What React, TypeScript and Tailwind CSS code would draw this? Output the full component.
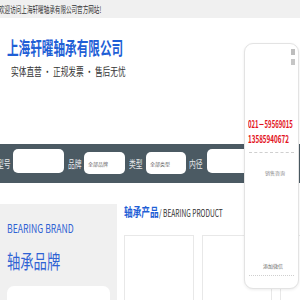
import React from "react";

const S = ({ s, children, className = "" }: { s: string; children: React.ReactNode; className?: string }) => (
  <span className={`inline-block origin-left whitespace-nowrap ${s} ${className}`}>{children}</span>
);

function Label({ w, ml, text }: { w: string; ml: string; text: string }) {
  return (
    <div className={`${w} ${ml} shrink-0 self-center text-[10px] leading-none text-[#e6e9eb] whitespace-nowrap overflow-visible`}>
      <S s="scale-x-[0.68]">{text}</S>
    </div>
  );
}

export default function App() {
  return (
    <div
      className="relative w-[300px] h-[300px] overflow-hidden bg-white"
      style={{ fontFamily: '"Noto Sans CJK SC", "Noto Sans", sans-serif' }}
    >
      {/* top bar */}
      <div className="h-[18px] bg-[#f0f0f0] flex items-center">
        <div className="ml-[-1px] text-[9px] leading-none text-[#333]">
          <S s="scale-x-[0.62]">欢迎访问上海轩曜轴承有限公司官方网站!</S>
        </div>
      </div>

      {/* header */}
      <div className="h-[126px]">
        <div className="pt-[19px] pl-[7px] text-[18px] leading-[20px] font-semibold text-[#1f5fd6]">
          <S s="scale-x-[0.645]">上海轩曜轴承有限公司</S>
        </div>
        <div className="pt-[7px] pl-[11px] text-[11px] leading-[14px] text-[#333]">
          <S s="scale-x-[0.7]">实体直营 · 正规发票 · 售后无忧</S>
        </div>
      </div>

      {/* search bar */}
      <div className="h-[39px] bg-[#4b5a63] flex items-start">
        <Label w="w-[13px]" ml="ml-[-3px]" text="型号" />
        <div className="w-[51px] h-[24px] mt-[5px] ml-[3px] shrink-0 bg-white rounded-[5px]" />
        <Label w="w-[15px]" ml="ml-[4px]" text="品牌" />
        <div className="w-[41px] h-[22px] mt-[8px] ml-[1px] shrink-0 bg-white rounded-[5px] flex items-center pl-[4px]">
          <span className="text-[5px] leading-none text-[#666] whitespace-nowrap">全部品牌</span>
        </div>
        <Label w="w-[16px]" ml="ml-[4px]" text="类型" />
        <div className="w-[40px] h-[22px] mt-[8px] ml-[1px] shrink-0 bg-white rounded-[5px] flex items-center pl-[4px]">
          <span className="text-[5px] leading-none text-[#666] whitespace-nowrap">全部类型</span>
        </div>
        <Label w="w-[17px]" ml="ml-[3px]" text="内径" />
        <div className="w-[50px] h-[24px] mt-[5px] ml-[1px] shrink-0 bg-white rounded-[5px]" />
      </div>

      {/* lower */}
      <div className="mt-[21px] flex h-[200px]">
        <div className="w-[117px] shrink-0 bg-[#f0f0f0] pl-[7px]">
          <div className="pt-[17px] text-[12px] leading-[14px] text-[#2f62d4]">
            <S s="scale-x-[0.72]">BEARING BRAND</S>
          </div>
          <div className="pt-[15px] text-[19px] leading-[22px] text-[#2f62d4]">
            <S s="scale-x-[0.7]">轴承品牌</S>
          </div>
          <div className="mt-[14px] w-[103px] h-[40px] bg-white rounded-[7px]" />
        </div>
        <div className="flex-1 pl-[7px]">
          <div className="pt-[2px] flex items-end leading-none whitespace-nowrap">
            <span className="text-[12px] font-semibold text-[#1f5fd6] w-[35px] overflow-visible">
              <S s="scale-x-[0.72]">轴承产品</S>
            </span>
            <span className="text-[10px] text-[#333]">
              <S s="scale-x-[0.66]">/ BEARING PRODUCT</S>
            </span>
          </div>
          <div className="mt-[17px] flex gap-[8px]">
            <div className="w-[70px] h-[80px] shrink-0 border border-[#e8e8e8]" />
            <div className="w-[70px] h-[80px] shrink-0 border border-[#e8e8e8]" />
            <div className="w-[70px] h-[80px] shrink-0 border border-[#e8e8e8]" />
          </div>
        </div>
      </div>

      {/* floating panel */}
      <div className="absolute left-[244px] top-[43px] w-[55px] h-[246px] bg-white border border-[#e3e3e3] rounded-[9px] shadow-[0_1px_3px_rgba(0,0,0,0.08)]">
        <div className="absolute right-[3px] top-[5px] w-[4px] h-[6px] bg-[#bdbdbd]" />
        <div className="absolute right-[3px] top-[15px] w-[4px] h-[6px] bg-[#c6c6c6]" />
        <div className="absolute left-[3px] top-[75px] text-[10.5px] leading-none font-semibold text-[#e3131d] whitespace-nowrap">
          <S s="scale-x-[0.57]">021－59569015</S>
        </div>
        <div className="absolute left-[3px] top-[90px] text-[10.5px] leading-none font-semibold text-[#e3131d] whitespace-nowrap">
          <S s="scale-x-[0.6]">13585940672</S>
        </div>
        <div className="absolute left-[4px] right-[4px] top-[108px] border-t border-dashed border-[#cfcfcf]" />
        <div className="absolute left-[20px] top-[126px] text-[5px] leading-none text-[#888] whitespace-nowrap">销售咨询</div>
        <div className="absolute left-[18px] top-[219px] text-[5px] leading-none text-[#666] whitespace-nowrap">添加微信</div>
        <div className="absolute left-[4px] right-[4px] top-[231px] border-t border-dotted border-[#cfcfcf]" />
      </div>
    </div>
  );
}
